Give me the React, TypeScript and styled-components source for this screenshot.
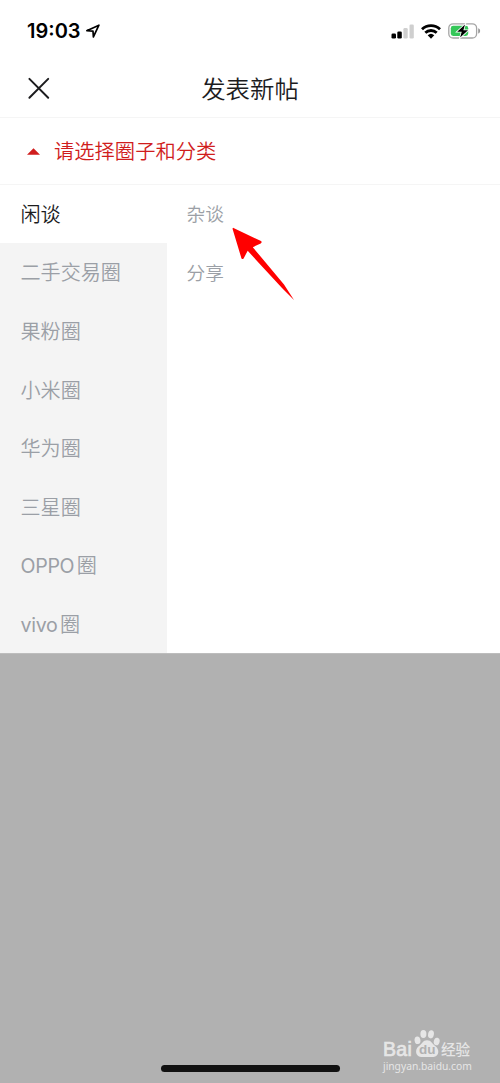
import React from "react";
import styled, { createGlobalStyle } from "styled-components";

const GlobalStyle = createGlobalStyle`
  * { box-sizing: border-box; }
  body { margin: 0; background: #fff; }
`;

const Screen = styled.main`
  position: relative;
  width: 500px;
  height: 1083px;
  display: flex;
  flex-direction: column;
  overflow: hidden;
  background: #fff;
  font-family: Inter, "Noto Sans CJK SC", sans-serif;
`;

const StatusBar = styled.div`
  height: 60px;
  padding: 2px 19px 0 27px;
  display: flex;
  align-items: center;
  justify-content: space-between;
`;

const StatusGroup = styled.div<{ $gap: number }>`
  display: flex;
  align-items: center;
  gap: ${(p) => p.$gap}px;
`;

const Clock = styled.time`
  font-size: 20px;
  line-height: 24px;
  font-weight: 600;
  letter-spacing: 0;
  color: #000;
`;

const Header = styled.header`
  height: 58px;
  padding: 0 27px 2px;
  display: grid;
  grid-template-columns: 24px 1fr 24px;
  align-items: center;
  border-bottom: 1px solid #f5f5f5;
`;

const CloseButton = styled.button`
  padding: 0;
  border: 0;
  background: none;
  display: flex;
`;

const Title = styled.h1`
  margin: 0;
  text-align: center;
  font-size: 24.4px;
  line-height: 36px;
  font-weight: 350;
  font-family: "Noto Sans CJK SC", sans-serif;
  color: #1c1c1e;
`;

const Selector = styled.div`
  height: 67px;
  padding-left: 27px;
  display: flex;
  align-items: center;
  gap: 14px;
  border-bottom: 1px solid #f5f5f5;
  font-size: 20.3px;
  line-height: 30px;
  font-weight: 350;
  color: #d01d1d;
`;

const SelectorLabel = styled.span`
  padding-top: 2px;
`;

const Picker = styled.section`
  height: 468px;
  display: flex;
`;

const Circles = styled.nav`
  width: 167px;
  background: #f4f4f4;
`;

const Categories = styled.div`
  flex: 1;
  padding-top: 1px;
`;

const Row = styled.div<{ $size: number; $active?: boolean }>`
  height: ${(p) => (p.$active ? 58.2 : 58.6)}px;
  padding-left: ${(p) => (p.$size > 19 ? 20.5 : 19.5)}px;
  padding-top: ${(p) => (p.$size > 19 ? 2 : 0)}px;
  display: flex;
  align-items: center;
  gap: 2.5px;
  font-size: ${(p) => p.$size}px;
  line-height: 30px;
  font-weight: 350;
  color: ${(p) => (p.$active ? "#1c1c1e" : "#9b9fa6")};
  background: ${(p) => (p.$active ? "#fff" : "transparent")};
`;

const Latin = styled.span`
  font-size: 19.6px;
  font-weight: 400;
  letter-spacing: -0.3px;
`;

const Overlay = styled.div`
  flex: 1;
  background: #b1b1b1;
  border-top: 1px solid #bdbdbd;
`;

const HomeIndicator = styled.div`
  position: absolute;
  left: 161px;
  top: 1065px;
  width: 179px;
  height: 7px;
  border-radius: 4px;
  background: #111;
`;

const Pointer = styled.svg`
  position: absolute;
  left: 228px;
  top: 224px;
`;

const Watermark = styled.div`
  position: absolute;
  left: 383px;
  top: 1028px;
  width: 92px;
  color: #e6e6e6;
`;

const Brand = styled.div`
  height: 31px;
  display: flex;
  align-items: flex-end;
`;

const BrandName = styled.span`
  width: 31px;
  padding-bottom: 1px;
  font: 400 19.5px/18px "Liberation Sans", sans-serif;
  -webkit-text-stroke: 0.7px currentColor;
  letter-spacing: 0.3px;
`;

const BrandProduct = styled.span`
  margin-left: 1px;
  font: 500 14.6px/20px "Noto Sans CJK SC", sans-serif;
`;

const Site = styled.div`
  padding-top: 1px;
  font: 400 10.3px/12px "Noto Sans", sans-serif;
  letter-spacing: -0.02px;
  white-space: nowrap;
`;

const circles: { latin?: string; name: string }[] = [
  { name: "闲谈" },
  { name: "二手交易圈" },
  { name: "果粉圈" },
  { name: "小米圈" },
  { name: "华为圈" },
  { name: "三星圈" },
  { latin: "OPPO", name: "圈" },
  { latin: "vivo", name: "圈" },
];

const LocationIcon = () => (
  <svg width="15" height="15" viewBox="0 0 15 15">
    <path d="M.8 6.7 12.9 1.2 7.4 12.9 7 7.2Z" fill="none" stroke="#000" strokeWidth="1.7" strokeLinejoin="round" />
  </svg>
);

const SignalIcon = () => (
  <svg width="23" height="15" viewBox="0 0 23 15">
    <rect x="0.5" y="9.5" width="4.5" height="5" rx="1.3" fill="#000" />
    <rect x="6.3" y="7.5" width="4.5" height="7" rx="1.3" fill="#000" />
    <rect x="12.4" y="4" width="4.3" height="10.5" rx="1.3" fill="#cfcfcf" />
    <rect x="18.5" y="0.4" width="4.3" height="14.1" rx="1.3" fill="#cfcfcf" />
  </svg>
);

const WifiIcon = () => (
  <svg width="20" height="15" viewBox="0 0 20 15">
    <g fill="none" stroke="#000" strokeWidth="2.8">
      <path d="M1 5.3a13 13 0 0 1 18 0" />
      <path d="M4.3 8.8a8.2 8.2 0 0 1 11.4 0" />
    </g>
    <path d="M6.7 11.3a4.8 4.8 0 0 1 6.6 0L10 14.7Z" fill="#000" />
  </svg>
);

const BatteryIcon = () => (
  <svg width="33" height="16" viewBox="0 0 33 16">
    <rect x="0.8" y="0.8" width="27.8" height="14.2" rx="4.3" fill="#fff" stroke="#a5a5a5" strokeWidth="1.3" />
    <rect x="2.8" y="2.8" width="17.4" height="10.2" rx="2.4" fill="#35c759" />
    <path d="M30.2 5.2c2.6.8 2.6 4.6 0 5.4Z" fill="#999" />
    <path d="M17 1.6 9.2 8.7h4.5l-1.6 5.9L20 7.2h-4.6Z" fill="#000" stroke="#fff" strokeWidth="1.6" paintOrder="stroke" />
  </svg>
);

const PawIcon = () => (
  <svg width="26" height="31" viewBox="0 0 26 31">
    <g fill="#e6e6e6">
      <ellipse cx="3.5" cy="12.3" rx="2.9" ry="3.8" transform="rotate(-12 3.5 12.3)" />
      <ellipse cx="9.4" cy="6" rx="3" ry="4.1" />
      <ellipse cx="17" cy="6.3" rx="2.9" ry="4.1" transform="rotate(10 17 6.3)" />
      <ellipse cx="22.7" cy="13.5" rx="2.9" ry="3.8" transform="rotate(14 22.7 13.5)" />
      <path d="M13 12.2c-4.3 0-4.9 3.7-8.6 6.4C.8 21.2 1.3 28.9 7 28.9h12.4c5.8 0 6.3-7.3 2.4-10.3-3.5-2.7-4.5-6.4-8.8-6.4Z" />
    </g>
    <text x="13.2" y="26.2" textAnchor="middle" fontFamily="Liberation Sans, sans-serif" fontWeight="700" fontSize="13.5" fill="#b1b1b1">du</text>
  </svg>
);

export default function App() {
  return (
    <Screen>
      <GlobalStyle />
      <StatusBar>
        <StatusGroup $gap={5}>
          <Clock>19:03</Clock>
          <LocationIcon />
        </StatusGroup>
        <StatusGroup $gap={7}>
          <SignalIcon />
          <WifiIcon />
          <BatteryIcon />
        </StatusGroup>
      </StatusBar>
      <Header>
        <CloseButton aria-label="关闭">
          <svg width="24" height="24" viewBox="0 0 24 24">
            <path d="M2.4 2.9 21.2 21.7M21.2 2.9 2.4 21.7" stroke="#1c1c1e" strokeWidth="2" strokeLinecap="round" />
          </svg>
        </CloseButton>
        <Title>发表新帖</Title>
      </Header>
      <Selector>
        <svg width="13" height="7" viewBox="0 0 13 7">
          <path d="M0 6.8 6.5.2 13 6.8Z" fill="#d01d1d" />
        </svg>
        <SelectorLabel>请选择圈子和分类</SelectorLabel>
      </Selector>
      <Picker>
        <Circles>
          {circles.map((c, i) => (
            <Row key={i} $size={20.1} $active={i === 0}>
              {c.latin && <Latin>{c.latin}</Latin>}
              <span>{c.name}</span>
            </Row>
          ))}
        </Circles>
        <Categories>
          <Row $size={18.7}>杂谈</Row>
          <Row $size={18.7}>分享</Row>
        </Categories>
      </Picker>
      <Overlay />
      <Pointer width="70" height="80" viewBox="0 0 70 80">
        <path d="M5.5 3.9 33 17.1Q34.4 18.4 32.7 19.4L24.8 23.2 56 60.5 66 76 54 64 19.7 26.8 15.6 34.4Q14.4 35.8 13.4 34.2L4.6 5Q4.5 3.7 5.5 3.9Z" fill="#f00" />
      </Pointer>
      <HomeIndicator />
      <Watermark>
        <Brand>
          <BrandName>Bai</BrandName>
          <PawIcon />
          <BrandProduct>经验</BrandProduct>
        </Brand>
        <Site>jingyan.baidu.com</Site>
      </Watermark>
    </Screen>
  );
}
